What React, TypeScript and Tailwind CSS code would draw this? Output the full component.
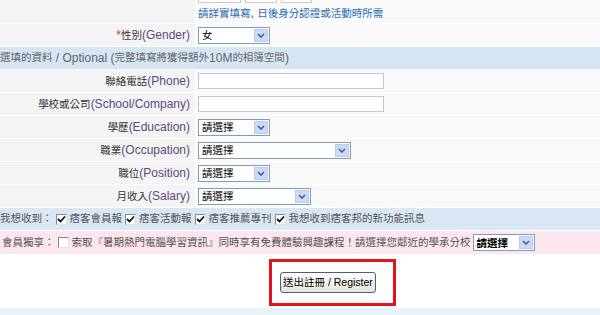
import React from 'react';

const CJK = /([\u2E80-\u9FFF\u3000-\u303F\uFF00-\uFFEF]+)/;

// splits text so CJK runs get the narrower size the reference uses
function M({ t }: { t: string }) {
  return (
    <>
      {t.split(CJK).map((s, i) =>
        !s ? null : i % 2 === 1 ? (
          <span key={i} className="text-[10.5px]">
            {s}
          </span>
        ) : (
          <span key={i} className="whitespace-pre">
            {s}
          </span>
        ),
      )}
    </>
  );
}

function Chevron() {
  return (
    <svg width="8" height="5" viewBox="0 0 8 5">
      <path d="M1 1 L4 4 L7 1" fill="none" stroke="#4b5f86" strokeWidth="1.6" />
    </svg>
  );
}

function Select({ w, text, bold }: { w: string; text: string; bold?: boolean }) {
  return (
    <div className={`flex h-[17px] items-center border border-[#7f9db9] bg-white ${w}`}>
      <span className={`flex-1 pl-[3px] leading-none text-black ${bold ? 'font-bold' : ''}`}>
        <M t={text} />
      </span>
      <span className="mr-px flex h-[13px] w-[14px] items-center justify-center border border-[#b7caf3] bg-[#cbdaf8]">
        <Chevron />
      </span>
    </div>
  );
}

function TextInput() {
  return <input className="h-[16px] w-[186px] border border-[#c6c6c6] bg-white outline-none" />;
}

function Label({ zh, en, req }: { zh: string; en: string; req?: boolean }) {
  return (
    <span>
      {req && <span className="text-[#e0302a]">*</span>}
      <span className="text-[10.5px] text-[#333]">{zh}</span>
      <span className="text-[#5d4a7d]">{en}</span>
    </span>
  );
}

function Row({ label, children }: { label?: React.ReactNode; children: React.ReactNode }) {
  return (
    <div className="flex h-[23px] border-b border-white">
      <div className="flex w-[195px] items-center justify-end bg-[#f4f4f4] pr-[5px]">{label}</div>
      <div className="w-px bg-white" />
      <div className="flex flex-1 items-center bg-[#f9f9f9] pl-[2px]">{children}</div>
    </div>
  );
}

function Check({ on }: { on?: boolean }) {
  return (
    <span className="mx-[3px] inline-flex h-[11px] w-[11px] items-center justify-center border border-t-[#8a8a8a] border-l-[#8a8a8a] border-r-[#e0e0e0] border-b-[#e0e0e0] bg-white align-[-1px]">
      {on && (
        <svg width="9" height="8" viewBox="0 0 9 8">
          <path d="M1 4 L3.5 6.5 L8 1.5" fill="none" stroke="#111" strokeWidth="1.8" />
        </svg>
      )}
    </span>
  );
}

export default function App() {
  return (
    <div className="h-[315px] w-[600px] overflow-hidden bg-white font-['Liberation_Sans','Noto_Sans_CJK_TC',sans-serif] text-[12px]">
      {/* birthday row, mostly scrolled away */}
      <div className="flex h-[24px] border-b border-white">
        <div className="w-[195px] bg-[#f4f4f4]" />
        <div className="w-px bg-white" />
        <div className="flex flex-1 flex-col bg-[#f9f9f9] pl-[2px]">
          <div className="flex h-[3px] items-end gap-[4px]">
            <div className="h-[10px] w-[43px] border border-[#c9c9c9] bg-white" />
            <div className="h-[10px] w-[32px] border border-[#c9c9c9] bg-white" />
            <div className="h-[10px] w-[31px] border border-[#c9c9c9] bg-white" />
          </div>
          <div className="pt-[3px] leading-[14px] text-[#2b6db3]">
            <M t="請詳實填寫, 日後身分認證或活動時所需" />
          </div>
        </div>
      </div>

      <Row label={<Label req zh="性別" en="(Gender)" />}>
        <Select w="w-[72px]" text="女" />
      </Row>

      <div className="flex h-[23px] items-center border-b border-white bg-[#d6e5f3] text-[#666]">
        <M t="選填的資料 / Optional (完整填寫將獲得額外10M的相簿空間)" />
      </div>

      <Row label={<Label zh="聯絡電話" en="(Phone)" />}>
        <TextInput />
      </Row>
      <Row label={<Label zh="學校或公司" en="(School/Company)" />}>
        <TextInput />
      </Row>
      <Row label={<Label zh="學歷" en="(Education)" />}>
        <Select w="w-[72px]" text="請選擇" />
      </Row>
      <Row label={<Label zh="職業" en="(Occupation)" />}>
        <Select w="w-[153px]" text="請選擇" />
      </Row>
      <Row label={<Label zh="職位" en="(Position)" />}>
        <Select w="w-[72px]" text="請選擇" />
      </Row>
      <Row label={<Label zh="月收入" en="(Salary)" />}>
        <Select w="w-[113px]" text="請選擇" />
      </Row>

      <div className="flex h-[23px] items-center border-b border-white bg-[#d9e6f3] text-[#555]">
        <M t="我想收到：" />
        <Check on />
        <M t="痞客會員報" />
        <Check on />
        <M t="痞客活動報" />
        <Check on />
        <M t="痞客推薦專刊" />
        <Check on />
        <M t="我想收到痞客邦的新功能訊息" />
      </div>

      <div className="flex h-[23px] items-center bg-[#fde6ed] pl-[2px] text-[#555]">
        <M t="會員獨享：" />
        <Check />
        <M t="索取『暑期熱門電腦學習資訊』同時享有免費體驗興趣課程！請選擇您鄰近的學承分校" />
        <span className="ml-[2px]">
          <Select w="w-[62px]" text="請選擇" bold />
        </span>
      </div>

      <div className="h-[54px] bg-white pl-[269px] pt-[5px]">
        <div className="flex h-[47px] w-[127px] items-start border-[3px] border-[#e5131b] pl-[8px] pt-[10px]">
          <button className="flex h-[21px] items-center justify-center whitespace-nowrap rounded-[3px] border border-[#46607e] bg-gradient-to-b from-white to-[#e6e4da] px-[2px] text-[10.5px] text-black">
            <M t="送出註冊 / Register" />
          </button>
        </div>
      </div>
      <div className="h-[7px] bg-[#eaf2fa]" />
    </div>
  );
}
